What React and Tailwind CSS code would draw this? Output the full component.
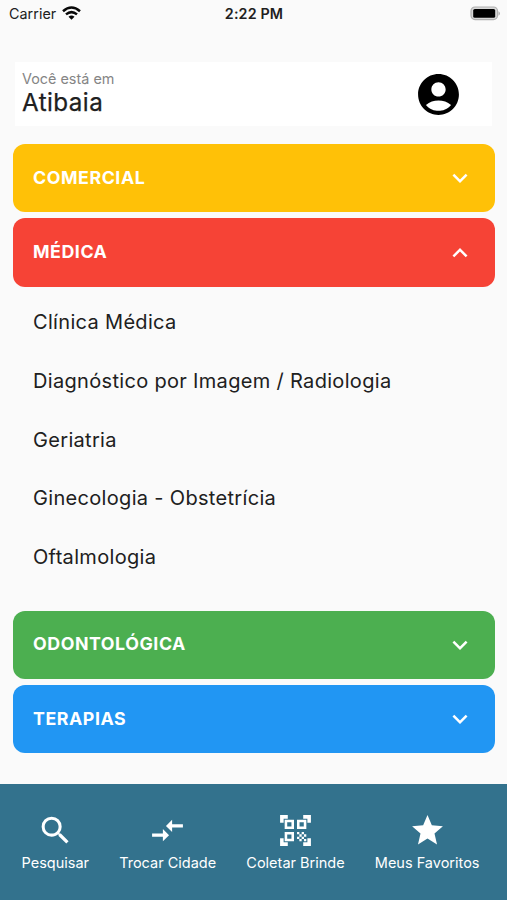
import React from "react";
import {
  MdAccountCircle,
  MdCompareArrows,
  MdExpandLess,
  MdExpandMore,
  MdSearch,
  MdStar,
} from "react-icons/md";

function StatusBar() {
  return (
    <header className="grid h-[28px] grid-cols-3 items-center pl-[9px] pr-[6px] text-[14.3px] leading-none text-[#202020]">
      <div className="flex items-center gap-[6px]">
        <span className="tracking-[0.05px]">Carrier</span>
        <svg className="mb-[2px] h-[14px] w-[19px]" viewBox="0 0 19 14" fill="none" stroke="#080808" strokeWidth="2.5">
          <path d="M1 5.2Q9.5-2.3 18 5.2" />
          <path d="M4 8.4Q9.5 3.8 15 8.4" />
          <path d="M6.5 10.7Q9.5 8.5 12.5 10.7L9.5 13.8Z" fill="#080808" stroke="none" />
        </svg>
      </div>
      <span className="pr-[2px] text-center font-semibold tracking-[0.15px]">2:22 PM</span>
      <svg className="mb-[1px] h-[15px] w-[32px] justify-self-end" viewBox="0 0 32 15">
        <rect x="2" y="1" width="26.5" height="12.6" rx="4" fill="#d8d8d8" stroke="#b0b0b0" strokeWidth="1.2" />
        <rect x="4.2" y="3" width="22" height="8.8" rx="1.6" fill="#000" />
        <path d="M29.5 5.2q2.8 2.2 0 4.6z" fill="#aaa" />
      </svg>
    </header>
  );
}

function Category({ label, color, open = false }) {
  const Chevron = open ? MdExpandLess : MdExpandMore;
  return (
    <button className={`flex h-[68.4px] w-full items-center justify-between rounded-[12px] pl-5 pr-[19.5px] text-white ${color}`}>
      <span className="text-[17.8px] font-bold tracking-[0.55px]">{label}</span>
      <Chevron className="size-[30px]" />
    </button>
  );
}

const specialties = [
  "Clínica Médica",
  "Diagnóstico por Imagem / Radiologia",
  "Geriatria",
  "Ginecologia - Obstetrícia",
  "Oftalmologia",
];

function QrScan({ className }) {
  return (
    <svg className={className} viewBox="0 0 24 24" fill="currentColor">
      <g fill="none" stroke="currentColor" strokeWidth="1.65">
        <path d="M5.800 5.800h4.400v4.400H5.800zM13.800 5.800h4.400v4.400h-4.400zM5.800 13.800h4.400v4.400H5.800z" />
      </g>
      <path d="M13 13h1.500v1.500H13V13zm1.500 1.500H16V16h-1.500v-1.500zM16 13h1.500v1.500H16V13zm-3 3h1.500v1.500H13V16zm1.500 1.500H16V19h-1.500v-1.500zM16 16h1.500v1.500H16V16zm1.500-1.500H19V16h-1.500v-1.500zm0 3H19V19h-1.500v-1.500z" />
      <path d="M22 7h-2.300V4.300H17V2h5v5zm0 15v-5h-2.300v2.700H17V22h5zM2 22h5v-2.300H4.300V17H2v5zM2 2v5h2.300V4.300H7V2H2z" />
    </svg>
  );
}

function NavItem({ icon: Icon, label }) {
  return (
    <button className="flex flex-col items-center gap-[5.5px] text-[14.5px] leading-[18px]">
      <Icon className="size-[37px]" />
      <span className="whitespace-nowrap">{label}</span>
    </button>
  );
}

export default function App() {
  return (
    <div className="flex h-[900px] w-[507px] flex-col overflow-hidden bg-[#fafafa] font-['Inter','Liberation_Sans',sans-serif]">
      <StatusBar />
      <section className="mx-[15px] mt-[34px] flex h-[64px] items-center justify-between bg-white pl-[7px] pr-[29px]">
        <div>
          <p className="text-[14.4px] leading-[18px] text-[#858585]">Você está em</p>
          <h1 className="text-[24.2px] leading-[30px] tracking-[0.45px] text-[#202020] [-webkit-text-stroke:0.25px]">Atibaia</h1>
        </div>
        <MdAccountCircle className="size-[49px] text-black" />
      </section>
      <main className="ml-[13px] mr-[12.5px] mt-[18px] flex flex-1 flex-col gap-[6px]">
        <Category label="COMERCIAL" color="bg-[#ffc107]" />
        <div>
          <Category label="MÉDICA" color="bg-[#f64336]" open />
          <ul className="mb-[18.2px] mt-[6.4px] text-[20px] text-[#202020]">
            {specialties.map((name) => (
              <li key={name} className="flex h-[58.65px] items-center pl-5 tracking-[0.32px]">{name}</li>
            ))}
          </ul>
        </div>
        <Category label="ODONTOLÓGICA" color="bg-[#4caf50]" />
        <Category label="TERAPIAS" color="bg-[#2196f3]" />
      </main>
      <nav className="flex h-[116px] items-start justify-between bg-[#33728d] pl-[21.5px] pr-[27.5px] pt-[27.5px] text-white">
        <NavItem icon={MdSearch} label="Pesquisar" />
        <NavItem icon={MdCompareArrows} label="Trocar Cidade" />
        <NavItem icon={QrScan} label="Coletar Brinde" />
        <NavItem icon={MdStar} label="Meus Favoritos" />
      </nav>
    </div>
  );
}
